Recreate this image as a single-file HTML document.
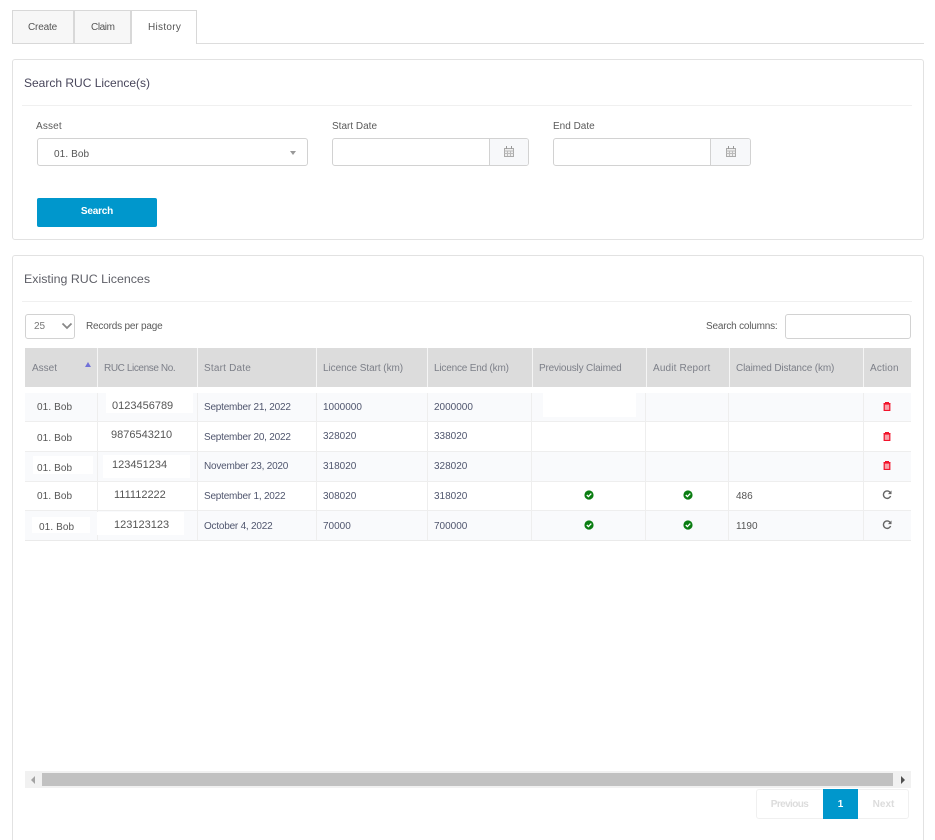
<!DOCTYPE html>
<html><head><meta charset="utf-8"><style>
html,body{margin:0;padding:0;background:#fff;width:935px;height:840px;overflow:hidden}
body{position:relative;font-family:"Liberation Sans",sans-serif;font-size:10px;color:#595d6e}
.a,.t{position:absolute;box-sizing:border-box}
.t{white-space:nowrap;line-height:14px;height:14px;margin-top:1px}
.h{color:#7c7f88}
.d{color:#50566e;letter-spacing:-.22px}
.n{color:#50566e}
.b{letter-spacing:.1px;color:#555}
.r{font-size:11px;color:#555}
svg{position:absolute;display:block}
</style></head><body>
<!-- tabs -->
<div class="a" style="left:12px;top:43px;width:912px;height:1px;background:#ddd"></div>
<div class="a" style="left:12px;top:10px;width:62px;height:34px;background:#f7f7f7;border:1px solid #d8d8d8"></div>
<div class="a" style="left:74px;top:10px;width:57px;height:34px;background:#f7f7f7;border:1px solid #d8d8d8"></div>
<div class="a" style="left:131px;top:10px;width:66px;height:34px;background:#fff;border:1px solid #d8d8d8;border-bottom:0"></div>
<div class="t" style="left:28px;top:20px;color:#555;letter-spacing:-.17px">Create</div>
<div class="t" style="left:91px;top:20px;color:#555;letter-spacing:-.4px">Claim</div>
<div class="t" style="left:148px;top:20px;color:#555;letter-spacing:.3px">History</div>
<!-- card 1 -->
<div class="a" style="left:12px;top:59px;width:912px;height:181px;border:1px solid #e2e2e2;border-radius:3px"></div>
<div class="t" style="left:24px;top:75px;font-size:12px;color:#48465b">Search RUC Licence(s)</div>
<div class="a" style="left:22px;top:105px;width:890px;height:1px;background:#f0f0f0"></div>
<div class="t" style="left:36px;top:119px;color:#5a5a5a;letter-spacing:.15px">Asset</div>
<div class="a" style="left:37px;top:138px;width:271px;height:28px;border:1px solid #d2d2d2;border-radius:3px"></div>
<div class="t" style="left:54px;top:147px;letter-spacing:.1px;color:#555">01. Bob</div>
<div class="a" style="left:290px;top:151px;width:0;height:0;border-left:3px solid transparent;border-right:3px solid transparent;border-top:4px solid #999"></div>
<div class="a" style="left:37px;top:198px;width:120px;height:29px;background:#0097cc;border-radius:2px"></div>
<div class="t" style="left:37px;top:204px;width:120px;text-align:center;color:#fff;font-weight:bold;letter-spacing:-.2px">Search</div>
<div class="t" style="left:332px;top:119px;color:#5a5a5a">Start Date</div>
<div class="a" style="left:332px;top:138px;width:197px;height:28px;border:1px solid #d2d2d2;border-radius:3px;overflow:hidden"><div class="a" style="left:156px;top:0;width:40px;height:26px;background:#f7f8fa;border-left:1px solid #d2d2d2"></div></div>
<svg style="left:504px;top:146px" width="10" height="11" viewBox="0 0 10 11"><path d="M.5 2.5h9v8h-9z" fill="#eee" stroke="#aaa"/><path d="M.5 5h9M3.5 5v5M6.5 5v5M.5 7.5h9" stroke="#bbb" fill="none"/><path d="M2.5 0v3M7.5 0v3" stroke="#999"/></svg>
<div class="t" style="left:553px;top:119px;color:#5a5a5a">End Date</div>
<div class="a" style="left:553px;top:138px;width:198px;height:28px;border:1px solid #d2d2d2;border-radius:3px;overflow:hidden"><div class="a" style="left:156px;top:0;width:41px;height:26px;background:#f7f8fa;border-left:1px solid #d2d2d2"></div></div>
<svg style="left:726px;top:146px" width="10" height="11" viewBox="0 0 10 11"><path d="M.5 2.5h9v8h-9z" fill="#eee" stroke="#aaa"/><path d="M.5 5h9M3.5 5v5M6.5 5v5M.5 7.5h9" stroke="#bbb" fill="none"/><path d="M2.5 0v3M7.5 0v3" stroke="#999"/></svg>
<!-- card 2 -->
<div class="a" style="left:12px;top:255px;width:912px;height:600px;border:1px solid #e2e2e2;border-radius:3px"></div>
<div class="t" style="left:24px;top:271px;font-size:12.4px;color:#5f6068">Existing RUC Licences</div>
<div class="a" style="left:22px;top:301px;width:890px;height:1px;background:#f0f0f0"></div>
<div class="a" style="left:25px;top:314px;width:50px;height:25px;border:1px solid #d2d2d2;border-radius:3px"></div>
<div class="t" style="left:34px;top:319px;color:#777">25</div>
<svg style="left:61px;top:322px" width="12" height="8" viewBox="0 0 12 8"><path d="M1.5 1.5l4.5 4.5 4.5-4.5" fill="none" stroke="#888" stroke-width="1.8"/></svg>
<div class="t" style="left:86px;top:319px;color:#5a5a5a;letter-spacing:-.19px">Records per page</div>
<div class="t" style="left:706px;top:319px;color:#5a5a5a;letter-spacing:-.2px">Search columns:</div>
<div class="a" style="left:785px;top:314px;width:126px;height:25px;border:1px solid #d2d2d2;border-radius:3px"></div>
<!-- table header -->
<div class="a" style="left:25px;top:348px;width:886px;height:39px;background:#dcdcdc"></div>
<div class="a" style="left:25px;top:393px;width:886px;height:28px;background:#f9fafc"></div>
<div class="a" style="left:25px;top:452px;width:886px;height:29px;background:#f9fafc"></div>
<div class="a" style="left:25px;top:511px;width:886px;height:29px;background:#f9fafc"></div>
<!-- horizontal lines -->
<div class="a" style="left:25px;top:421px;width:886px;height:1px;background:#eee"></div>
<div class="a" style="left:25px;top:451px;width:886px;height:1px;background:#eee"></div>
<div class="a" style="left:25px;top:481px;width:886px;height:1px;background:#eee"></div>
<div class="a" style="left:25px;top:510px;width:886px;height:1px;background:#eee"></div>
<div class="a" style="left:25px;top:540px;width:886px;height:1px;background:#eaeaea"></div>
<!-- vertical lines -->
<div class="a" style="left:97px;top:348px;width:1px;height:39px;background:#f5f5f5"></div><div class="a" style="left:97px;top:393px;width:1px;height:147px;background:#eee"></div>
<div class="a" style="left:197px;top:348px;width:1px;height:39px;background:#f5f5f5"></div><div class="a" style="left:197px;top:393px;width:1px;height:147px;background:#eee"></div>
<div class="a" style="left:316px;top:348px;width:1px;height:39px;background:#f5f5f5"></div><div class="a" style="left:316px;top:393px;width:1px;height:147px;background:#eee"></div>
<div class="a" style="left:427px;top:348px;width:1px;height:39px;background:#f5f5f5"></div><div class="a" style="left:427px;top:393px;width:1px;height:147px;background:#eee"></div>
<div class="a" style="left:532px;top:348px;width:1px;height:39px;background:#f5f5f5"></div><div class="a" style="left:531px;top:393px;width:1px;height:147px;background:#eee"></div>
<div class="a" style="left:646px;top:348px;width:1px;height:39px;background:#f5f5f5"></div><div class="a" style="left:645px;top:393px;width:1px;height:147px;background:#eee"></div>
<div class="a" style="left:729px;top:348px;width:1px;height:39px;background:#f5f5f5"></div><div class="a" style="left:728px;top:393px;width:1px;height:147px;background:#eee"></div>
<div class="a" style="left:863px;top:348px;width:1px;height:39px;background:#f5f5f5"></div><div class="a" style="left:863px;top:393px;width:1px;height:147px;background:#eee"></div>
<!-- header text -->
<div class="t h" style="left:32px;top:361px">Asset</div>
<div class="a" style="left:85px;top:362px;width:0;height:0;border-left:3px solid transparent;border-right:3px solid transparent;border-bottom:5px solid #7272d8"></div>
<div class="t h" style="left:104px;top:361px;letter-spacing:-.4px">RUC License No.</div>
<div class="t h" style="left:204px;top:361px;letter-spacing:.2px">Start Date</div>
<div class="t h" style="left:323px;top:361px;letter-spacing:-.06px">Licence Start (km)</div>
<div class="t h" style="left:434px;top:361px;letter-spacing:-.19px">Licence End (km)</div>
<div class="t h" style="left:539px;top:361px;letter-spacing:-.17px">Previously Claimed</div>
<div class="t h" style="left:653px;top:361px;letter-spacing:.15px">Audit Report</div>
<div class="t h" style="left:736px;top:361px;letter-spacing:-.14px">Claimed Distance (km)</div>
<div class="t h" style="left:870px;top:361px;letter-spacing:.15px">Action</div>
<!-- redaction patches -->
<div class="a" style="left:106px;top:391px;width:87px;height:22px;background:#fff"></div>
<div class="a" style="left:543px;top:393px;width:93px;height:24px;background:#fff"></div>
<div class="a" style="left:33px;top:456px;width:60px;height:18px;background:#fff"></div>
<div class="a" style="left:103px;top:455px;width:87px;height:23px;background:#fff"></div>
<div class="a" style="left:32px;top:517px;width:58px;height:16px;background:#fff"></div>
<div class="a" style="left:97px;top:512px;width:87px;height:23px;background:#fff"></div>
<!-- rows -->
<div class="t b" style="left:37px;top:400px">01. Bob</div>
<div class="t r" style="left:112px;top:398px">0123456789</div>
<div class="t d" style="left:204px;top:400px">September 21, 2022</div>
<div class="t n" style="left:323px;top:400px">1000000</div>
<div class="t n" style="left:434px;top:400px">2000000</div>
<div class="t b" style="left:37px;top:431px">01. Bob</div>
<div class="t r" style="left:111px;top:427px">9876543210</div>
<div class="t d" style="left:204px;top:430px">September 20, 2022</div>
<div class="t n" style="left:323px;top:429px">328020</div>
<div class="t n" style="left:434px;top:429px">338020</div>
<div class="t b" style="left:37px;top:461px">01. Bob</div>
<div class="t r" style="left:112px;top:457px">123451234</div>
<div class="t d" style="left:204px;top:459px">November 23, 2020</div>
<div class="t n" style="left:323px;top:459px">318020</div>
<div class="t n" style="left:434px;top:459px">328020</div>
<div class="t b" style="left:37px;top:489px">01. Bob</div>
<div class="t r" style="left:114px;top:487px">111112222</div>
<div class="t d" style="left:204px;top:489px">September 1, 2022</div>
<div class="t n" style="left:323px;top:489px">308020</div>
<div class="t n" style="left:434px;top:489px">318020</div>
<div class="t" style="left:736px;top:489px;color:#555">486</div>
<div class="t b" style="left:39px;top:520px">01. Bob</div>
<div class="t r" style="left:114px;top:517px">123123123</div>
<div class="t d" style="left:204px;top:519px">October 4, 2022</div>
<div class="t n" style="left:323px;top:519px">70000</div>
<div class="t n" style="left:434px;top:519px">700000</div>
<div class="t" style="left:736px;top:519px;color:#555">1190</div>
<!-- check icons -->
<svg style="left:584px;top:490px" width="10" height="10" viewBox="0 0 10 10"><circle cx="5" cy="5" r="4.6" fill="#0a7d12"/><path d="M2.8 5l1.6 1.6 2.9-3" fill="none" stroke="#fff" stroke-width="1.3"/></svg>
<svg style="left:584px;top:520px" width="10" height="10" viewBox="0 0 10 10"><circle cx="5" cy="5" r="4.6" fill="#0a7d12"/><path d="M2.8 5l1.6 1.6 2.9-3" fill="none" stroke="#fff" stroke-width="1.3"/></svg>
<svg style="left:683px;top:490px" width="10" height="10" viewBox="0 0 10 10"><circle cx="5" cy="5" r="4.6" fill="#0a7d12"/><path d="M2.8 5l1.6 1.6 2.9-3" fill="none" stroke="#fff" stroke-width="1.3"/></svg>
<svg style="left:683px;top:520px" width="10" height="10" viewBox="0 0 10 10"><circle cx="5" cy="5" r="4.6" fill="#0a7d12"/><path d="M2.8 5l1.6 1.6 2.9-3" fill="none" stroke="#fff" stroke-width="1.3"/></svg>
<!-- trash icons -->
<svg style="left:883px;top:402px" width="8" height="9" viewBox="0 0 8 9"><path d="M.5 1.5h7M2.5 1.5V.5h3v1" fill="none" stroke="#f2132b"/><path d="M1.2 2h5.6v6.5H1.2z" fill="#f8a0a8" stroke="#f2132b" stroke-width="1.2"/></svg>
<svg style="left:883px;top:432px" width="8" height="9" viewBox="0 0 8 9"><path d="M.5 1.5h7M2.5 1.5V.5h3v1" fill="none" stroke="#f2132b"/><path d="M1.2 2h5.6v6.5H1.2z" fill="#f8a0a8" stroke="#f2132b" stroke-width="1.2"/></svg>
<svg style="left:883px;top:461px" width="8" height="9" viewBox="0 0 8 9"><path d="M.5 1.5h7M2.5 1.5V.5h3v1" fill="none" stroke="#f2132b"/><path d="M1.2 2h5.6v6.5H1.2z" fill="#f8a0a8" stroke="#f2132b" stroke-width="1.2"/></svg>
<!-- refresh icons -->
<svg style="left:882px;top:490px" width="10" height="10" viewBox="0 0 10 10"><path d="M8 2.3A3.7 3.7 0 1 0 8.6 6" fill="none" stroke="#666" stroke-width="1.4"/><path d="M9.5.5v3.6H5.9z" fill="#666"/></svg>
<svg style="left:882px;top:520px" width="10" height="10" viewBox="0 0 10 10"><path d="M8 2.3A3.7 3.7 0 1 0 8.6 6" fill="none" stroke="#666" stroke-width="1.4"/><path d="M9.5.5v3.6H5.9z" fill="#666"/></svg>
<!-- scrollbar -->
<div class="a" style="left:25px;top:771px;width:886px;height:17px;background:#f1f1f1"></div>
<div class="a" style="left:42px;top:773px;width:851px;height:13px;background:#c1c1c1"></div>
<div class="a" style="left:31px;top:776px;width:0;height:0;border-top:4px solid transparent;border-bottom:4px solid transparent;border-right:4px solid #a3a3a3"></div>
<div class="a" style="left:901px;top:776px;width:0;height:0;border-top:4px solid transparent;border-bottom:4px solid transparent;border-left:4px solid #505050"></div>
<!-- pagination -->
<div class="a" style="left:756px;top:789px;width:153px;height:30px;border:1px solid #f0f0f0;border-radius:3px"></div>
<div class="a" style="left:823px;top:789px;width:35px;height:30px;background:#0097cc"></div>
<div class="t" style="left:756px;top:797px;width:67px;text-align:center;color:#dcdcdc;font-weight:bold;letter-spacing:-.6px">Previous</div>
<div class="t" style="left:823px;top:797px;width:35px;text-align:center;color:#fff;font-weight:bold">1</div>
<div class="t" style="left:858px;top:797px;width:51px;text-align:center;color:#dcdcdc;font-weight:bold">Next</div>
</body></html>
